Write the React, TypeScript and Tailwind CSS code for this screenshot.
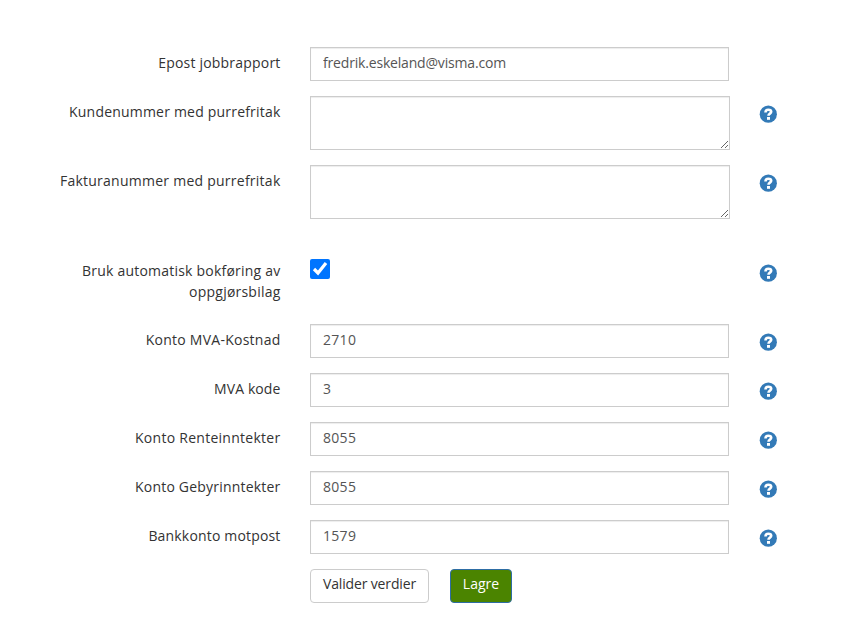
import React, { useState } from 'react';

interface FieldProps {
  id: string;
  label: React.ReactNode;
  help?: boolean;
  className: string;
  labelClass?: string;
  children: React.ReactNode;
}

const HelpIcon: React.FC = () => (
  <svg viewBox="0 0 18 18" className="h-[18px] w-[18px]" aria-hidden="true">
    <circle cx="9.3" cy="9.2" r="8.6" fill="#337ab7" />
    <path d="M6.5 7.4C6.5 5.4 7.6 4.7 9.3 4.7s2.9.7 2.9 2.1c0 1.9-2.7 1.7-2.7 3.9" fill="none" stroke="#fff" strokeWidth="2.6" />
    <rect x="8" y="12" width="3" height="2.8" fill="#fff" />
  </svg>
);

const Field: React.FC<FieldProps> = ({ id, label, help = true, className, labelClass = 'tracking-[0.2px]', children }) => (
  <div className={`flex items-start ${className}`}>
    <label htmlFor={id} className={`w-[280.5px] shrink-0 pt-[5px] text-right leading-[21px] text-[#333] ${labelClass}`}>
      {label}
    </label>
    <div className="ml-[29.5px] w-[449px] shrink-0">{children}</div>
    {help && (
      <button type="button" aria-label="Hjelp" className="pt-[9px]">
        <HelpIcon />
      </button>
    )}
  </div>
);

const controlClass =
  'block border border-[#ccc] bg-white px-3 text-[14px] text-[#555] shadow-[inset_0_1px_1px_rgba(0,0,0,0.075)] outline-none';

const accounts = [
  { id: 'kontoMva', label: 'Konto MVA-Kostnad', value: '2710', labelClass: 'tracking-[0.25px]' },
  { id: 'mvaKode', label: 'MVA kode', value: '3', labelClass: 'tracking-[0.1px]' },
  { id: 'kontoRente', label: 'Konto Renteinntekter', value: '8055', labelClass: 'tracking-[0.27px]' },
  { id: 'kontoGebyr', label: 'Konto Gebyrinntekter', value: '8055', labelClass: 'tracking-[0.2px]' },
  { id: 'bankkonto', label: 'Bankkonto motpost', value: '1579', labelClass: 'tracking-[0.17px]' },
];

const App: React.FC = () => {
  const [autoPosting, setAutoPosting] = useState(true);

  return (
    <form
      onSubmit={(e) => e.preventDefault()}
      className="min-h-screen bg-white pt-[47px] font-['Open_Sans','Noto_Sans',sans-serif] text-[14px]"
    >
      <Field id="epost" label="Epost jobbrapport" help={false} className="h-[49px]">
        <input
          id="epost"
          defaultValue="fredrik.eskeland@visma.com"
          className={`${controlClass} h-[34px] w-[419px] pb-1 tracking-[-0.18px]`}
        />
      </Field>
      <Field id="kunde" label="Kundenummer med purrefritak" className="h-[69px]">
        <textarea id="kunde" className={`${controlClass} h-[54px] w-[420px] py-1.5`} />
      </Field>
      <Field id="faktura" label="Fakturanummer med purrefritak" className="h-[90px]" labelClass="tracking-[0.25px]">
        <textarea id="faktura" className={`${controlClass} h-[54px] w-[420px] py-1.5`} />
      </Field>
      <Field
        id="auto"
        label={<>Bruk automatisk bokføring av<br />oppgjørsbilag</>}
        className="h-[69px]"
        labelClass="tracking-[0.22px]"
      >
        <input
          id="auto"
          type="checkbox"
          checked={autoPosting}
          onChange={(e) => setAutoPosting(e.target.checked)}
          className="mt-1 block h-5 w-5"
        />
      </Field>

      {accounts.map((a) => (
        <Field key={a.id} id={a.id} label={a.label} className="h-[49px]" labelClass={a.labelClass}>
          <input
            id={a.id}
            defaultValue={a.value}
            className={`${controlClass} h-[34px] w-[419px] pb-1 tracking-[0.3px]`}
          />
        </Field>
      ))}

      <div className="ml-[310px] flex gap-[21px]">
        <button
          type="button"
          className="h-[34px] w-[119px] whitespace-nowrap rounded-[4px] border border-[#ccc] bg-white pb-1.5 tracking-[-0.15px] text-[#333]"
        >
          Valider verdier
        </button>
        <button type="submit" className="h-[34px] w-[62px] rounded-[4px] border border-[#2e6da4] bg-[#4b8400] pb-1.5 text-white">
          Lagre
        </button>
      </div>
    </form>
  );
};

export default App;
